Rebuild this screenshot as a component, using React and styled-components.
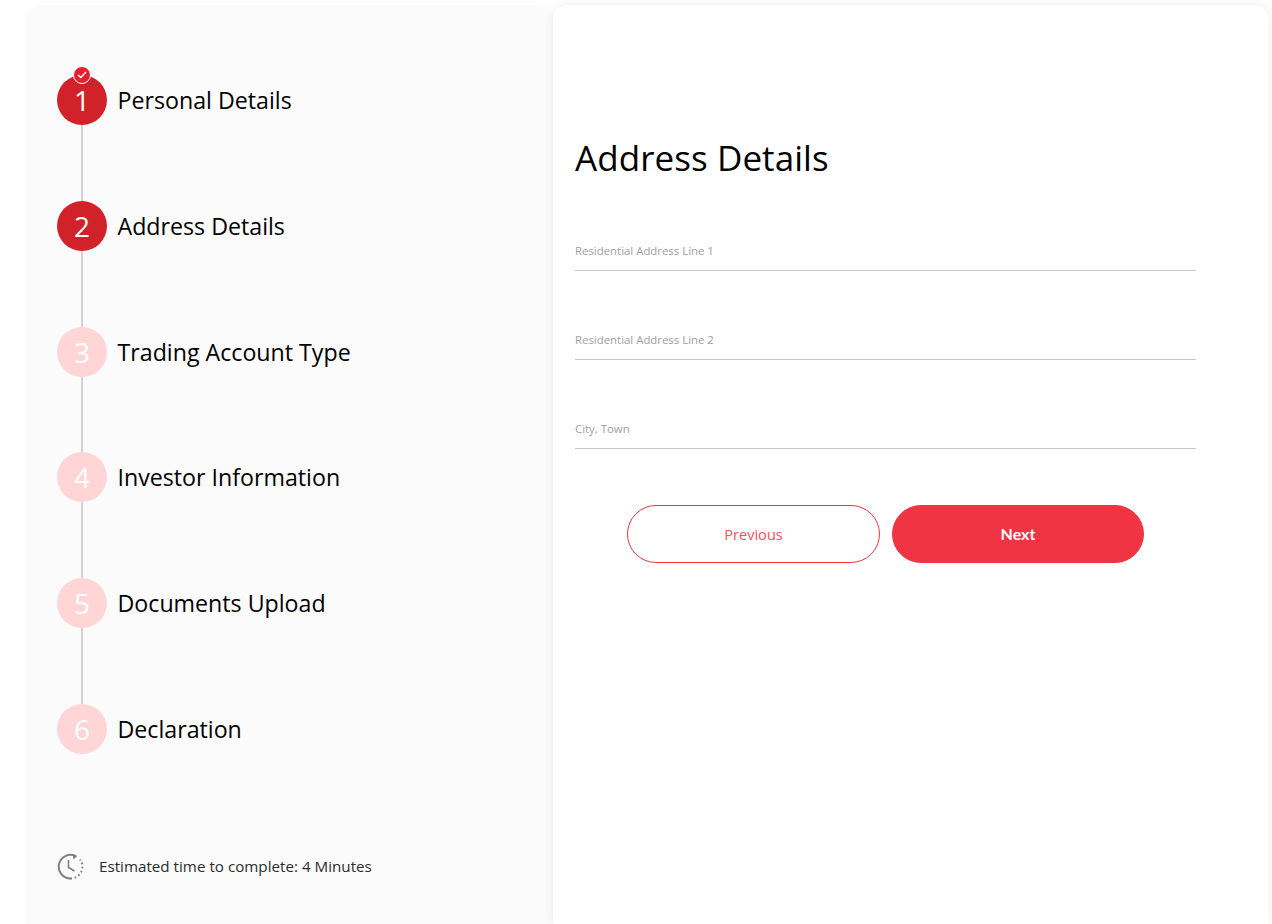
import styled, { createGlobalStyle } from "styled-components"

const GlobalStyle = createGlobalStyle`
  html, body {
    margin: 0;
    padding: 0;
    background: #ffffff;
    font-family: "Open Sans", "Liberation Sans", sans-serif;
  }
`

const Page = styled.div`
  display: flex;
  height: 924px;
  box-sizing: border-box;
  padding: 5px 4px 0 26px;
  overflow: hidden;
`

const SidePanel = styled.aside`
  display: flex;
  flex-direction: column;
  width: 527px;
  box-sizing: border-box;
  padding: 70px 0 0 31px;
  background: #fbfbfb;
  border-radius: 14px 14px 0 0;
`

const StepList = styled.div`
  display: flex;
  flex-direction: column;
  gap: 75.8px;
`

const StepRow = styled.div`
  position: relative;
  display: flex;
  align-items: center;
  gap: 10.5px;
  height: 50px;
`

const Connector = styled.span`
  position: absolute;
  left: 24px;
  top: 50px;
  width: 2px;
  height: 76px;
  background: #d2d2d2;
`

const StepCircle = styled.div`
  position: relative;
  display: flex;
  align-items: center;
  justify-content: center;
  width: 50px;
  height: 50px;
  border-radius: 50%;
  background: ${(p) => (p.$active ? "#d12229" : "#ffd5d5")};
  color: #ffffff;
  font-size: 28px;
  line-height: 1;
`

const CheckBadge = styled.span`
  position: absolute;
  top: -9px;
  left: 16px;
  display: flex;
  align-items: center;
  justify-content: center;
  width: 18px;
  height: 18px;
  box-sizing: border-box;
  border: 1px solid #ffffff;
  border-radius: 50%;
  background: #e8202e;
`

const StepName = styled.div`
  font-size: 23.2px;
  line-height: 32px;
  color: #000000;
`

const EstimateRow = styled.div`
  display: flex;
  align-items: center;
  gap: 15px;
  margin-top: 99px;
  font-size: 15.2px;
  color: #2c2c2c;
`

const MainPanel = styled.main`
  flex: 1;
  box-sizing: border-box;
  padding: 128px 72px 0 22px;
  background: #ffffff;
  border-radius: 14px 14px 0 0;
  box-shadow: 0 0 12px rgba(0, 0, 0, 0.07);
`

const Heading = styled.h1`
  margin: 0 0 47px;
  font-size: 35px;
  font-weight: 400;
  line-height: 50px;
  letter-spacing: 0.07px;
  color: #000000;
`

const Field = styled.label`
  display: block;
  height: 41px;
  margin-bottom: 48px;
  box-sizing: border-box;
  padding-top: 13px;
  border-bottom: 1px solid #c8c8c8;
  font-size: 11.4px;
  line-height: 16px;
  color: #a0a0a0;
`

const ButtonRow = styled.div`
  display: flex;
  justify-content: center;
  gap: 12px;
  margin-top: 56px;
`

const PillButton = styled.button`
  width: ${(p) => (p.$filled ? "252px" : "253px")};
  height: 58px;
  box-sizing: border-box;
  padding: 0 0 ${(p) => (p.$filled ? "2px" : "0")};
  border: 1px solid #f03444;
  border-radius: 29px;
  background: ${(p) => (p.$filled ? "#f03444" : "#ffffff")};
  color: ${(p) => (p.$filled ? "#ffffff" : "#f2505d")};
  font-family: ${(p) => (p.$filled ? "Lato" : '"Open Sans"')}, sans-serif;
  font-size: ${(p) => (p.$filled ? "16px" : "14.6px")};
  font-weight: ${(p) => (p.$filled ? 700 : 400)};
`

const steps = [
  "Personal Details",
  "Address Details",
  "Trading Account Type",
  "Investor Information",
  "Documents Upload",
  "Declaration",
]

function ClockIcon() {
  return (
    <svg width="27" height="27" viewBox="0 0 27 27" fill="none" stroke="#808080" strokeWidth="2">
      <path d="M18.5 3A11.8 11.8 0 1 0 13.5 25.5" strokeLinecap="round" />
      <path d="M13.5 25.5A12 12 0 0 0 25.5 13.5A12 12 0 0 0 23 6.5" strokeDasharray="1.6 2.6" />
      <path d="M15.5 0.8L20 3.2L16.5 6.6" fill="#808080" stroke="none" />
      <path d="M11.5 7V14.5L17.5 18" strokeWidth="1.6" />
    </svg>
  )
}

function App() {
  return (
    <>
      <GlobalStyle />
      <Page>
        <SidePanel>
          <StepList>
            {steps.map((name, i) => (
              <StepRow key={name}>
                {i < steps.length - 1 && <Connector />}
                <StepCircle $active={i < 2}>
                  {i + 1}
                  {i === 0 && (
                    <CheckBadge>
                      <svg width="10" height="8" viewBox="0 0 10 8" fill="none" stroke="#ffffff" strokeWidth="1.4">
                        <path d="M1 4L3.8 6.6L9 1" />
                      </svg>
                    </CheckBadge>
                  )}
                </StepCircle>
                <StepName>{name}</StepName>
              </StepRow>
            ))}
          </StepList>
          <EstimateRow>
            <ClockIcon />
            Estimated time to complete: 4 Minutes
          </EstimateRow>
        </SidePanel>
        <MainPanel>
          <Heading>Address Details</Heading>
          <Field>Residential Address Line 1</Field>
          <Field>Residential Address Line 2</Field>
          <Field>City, Town</Field>
          <ButtonRow>
            <PillButton>Previous</PillButton>
            <PillButton $filled>Next</PillButton>
          </ButtonRow>
        </MainPanel>
      </Page>
    </>
  )
}

export default App
